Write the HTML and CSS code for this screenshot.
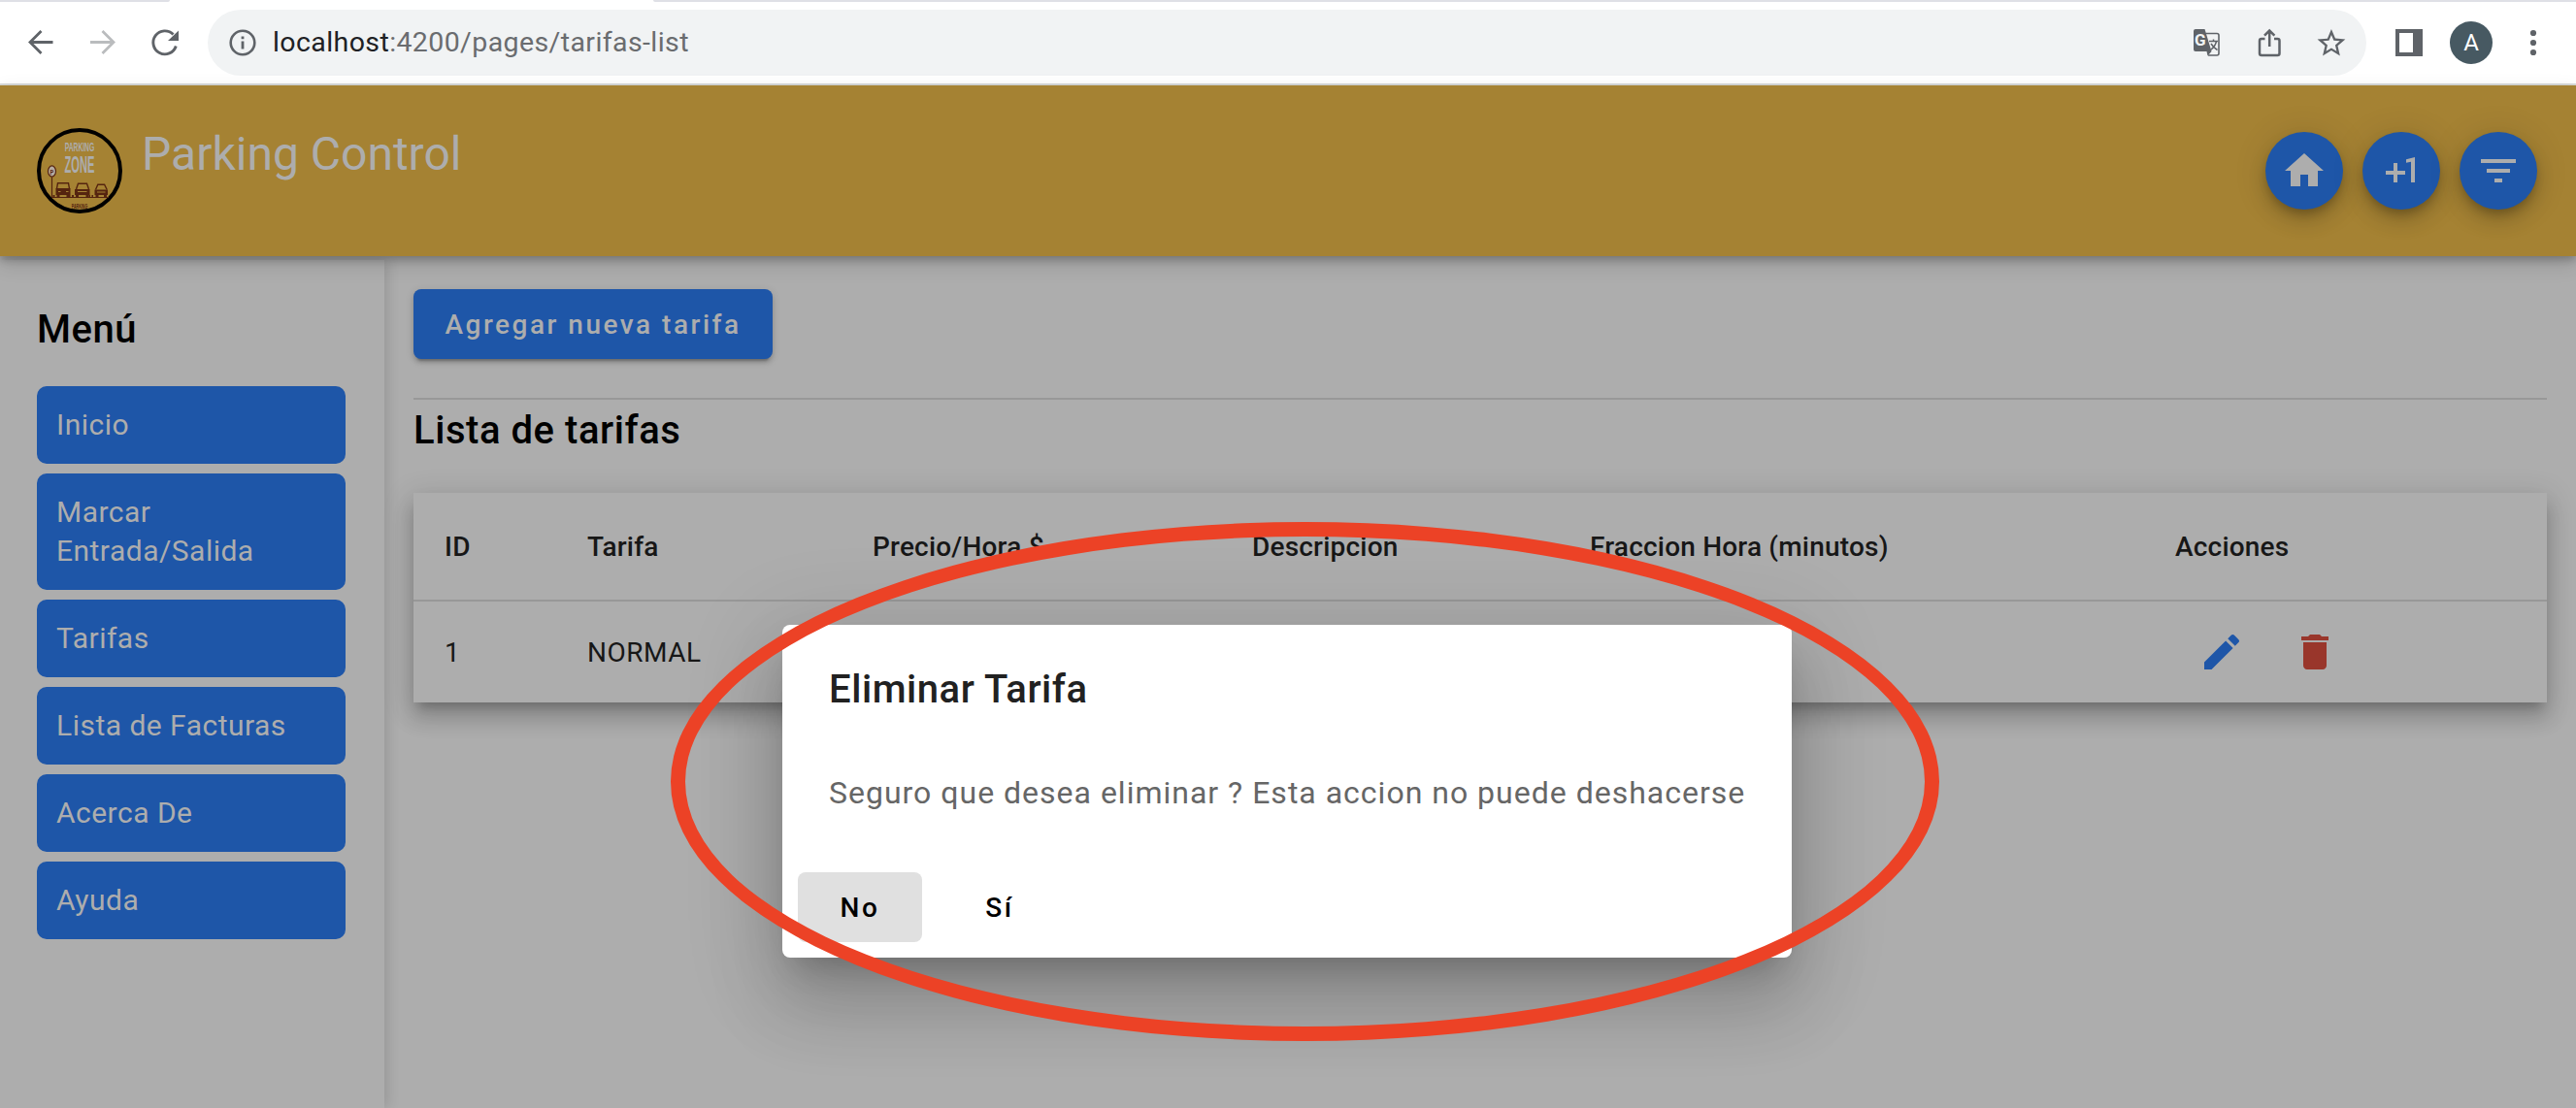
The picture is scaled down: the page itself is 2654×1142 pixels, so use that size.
FILE: index.html
```html
<!DOCTYPE html>
<html lang="es">
<head>
<meta charset="utf-8">
<title>Parking Control</title>
<link rel="stylesheet" href="styles.css">
</head>
<body>
<div class="browser">
  <div class="tab-strip"><span class="tab-edge tab-edge-left"></span><span class="tab-edge tab-edge-right"></span></div>
  <div class="toolbar">
    <svg class="nav-icon" viewBox="0 0 32 32"><path d="M28.500 15.500H5M16.500 4 5 15.500 16.500 27" fill="none" stroke="#5f6368" stroke-width="2.800"/></svg>
    <svg class="nav-icon" viewBox="0 0 32 32"><path d="M3 15.500h24M15.500 4 27 15.500 15.500 27" fill="none" stroke="#babcbe" stroke-width="2.800"/></svg>
    <svg class="nav-icon" viewBox="0 0 32 32"><path d="M27.300 19.500A12 12 0 1 1 24.500 7.500" fill="none" stroke="#5f6368" stroke-width="2.900"/><path d="M30 3.500v10.500H19z" fill="#5f6368"/></svg>
    <div class="omnibox">
      <svg class="info-icon" viewBox="0 0 28 28"><circle cx="14" cy="14" r="12.300" fill="none" stroke="#5f6368" stroke-width="2.600"/><path d="M12.600 12.500h2.800v8h-2.800zM12.600 7.500h2.800v2.800h-2.800z" fill="#5f6368"/></svg>
      <span class="url"><span class="url-host">localhost</span>:4200/pages/tarifas-list</span>
      <div class="omnibox-actions">
        <svg class="action-icon" viewBox="0 0 32 32"><path d="M12 6.500h14a2 2 0 0 1 2 2V27a2 2 0 0 1-2 2h-9" fill="none" stroke="#5f6368" stroke-width="1.600"/><path d="M4 2h9.500l7 23h-16.500a2 2 0 0 1-2-2V4a2 2 0 0 1 2-2z" fill="#5f6368"/><path d="m15.500 25h5l-4 4.500z" fill="#5f6368"/><text x="3" y="19" class="translate-g">G</text><path d="M18 14.500h9M22.500 12.500v2M25.500 14.500c-.8 4-3.500 7-6 9M20 17c1.500 2.500 4 5 6.500 6.500" fill="none" stroke="#5f6368" stroke-width="1.500"/></svg>
        <svg class="action-icon" viewBox="0 0 32 32"><path d="M11.500 12H8a2 2 0 0 0-2 2v13a2 2 0 0 0 2 2h16.500a2 2 0 0 0 2-2V14a2 2 0 0 0-2-2H21M16.200 20V4M11 8.700l5.200-5.200 5.200 5.200" fill="none" stroke="#5f6368" stroke-width="2.500"/></svg>
        <svg class="action-icon" viewBox="0 0 24 24"><path d="M22 9.240l-7.190-.62L12 2 9.190 8.630 2 9.240l5.460 4.730L5.820 21 12 17.270 18.180 21l-1.630-7.030L22 9.240zM12 15.400l-3.760 2.270 1-4.280-3.320-2.880 4.380-.38L12 6.100l1.710 4.040 4.380.38-3.320 2.880 1 4.280L12 15.400z" transform="translate(-1 -.6) scale(1.080)" fill="#5f6368"/></svg>
      </div>
    </div>
    <svg class="panel-icon" viewBox="0 0 28 28"><path fill-rule="evenodd" d="M0 0h28v28H0zM4 4v20h14V4z" fill="#5f6368"/></svg>
    <span class="avatar">A</span>
    <svg class="menu-icon" viewBox="0 0 8 28"><circle cx="4" cy="4" r="3.100"/><circle cx="4" cy="14" r="3.100"/><circle cx="4" cy="24" r="3.100"/></svg>
  </div>
</div>

<header class="app-header">
  <svg class="logo" viewBox="0 0 88 88">
    <circle cx="44" cy="44" r="42" fill="none" stroke="#000" stroke-width="4"/>
    <text transform="translate(28.700 24) scale(.56 1)" class="logo-small">PARKING</text>
    <text transform="translate(28.500 46) scale(.455 1)" class="logo-big">ZONE</text>
    <g fill="none" stroke="#55240f" stroke-width="1.200">
      <ellipse cx="15.500" cy="44.500" rx="4" ry="5.600" fill="#b5aaa0"/>
      <path d="M15.500 50.500V71M15 71.500H74"/>
    </g>
    <text transform="translate(13.500 47.500) scale(.7 1)" class="logo-p">P</text>
    <path d="M16.500 71v-2h2v2zM33 71v-2h1.500v2zM36 71v-2h2v2zM53.500 71v-2H55v2zM56.500 71v-2h1.500v2z" fill="#55240f"/>
    <g fill="none" stroke="#55240f" stroke-width="1.400"><path d="M20.500 62.500l1-5.700h11l1 5.700"/><path d="M40.500 63l2-5.700h9l2 5.700"/><path d="M60.500 63.500l2.300-5.200h6.800l2.600 5.200"/></g>
    <g fill="#55240f"><path d="M19.500 62h15v7h-1v2h-3v-2h-7v2h-3v-2h-1zM39 63h15.500v6h-1v2h-3v-2h-7.500v2h-3v-2h-1zM59.500 63.500h13.500v5.500h-1v2h-3v-2h-5.500v2h-3v-2h-1z"/></g>
    <path d="M22 65.500h2.500M30 65.500h2.500M42 65.500h9.500M62 66h8.500" stroke="#a58233" stroke-width="1"/>
    <text transform="translate(35.800 83) scale(.453 1)" class="logo-foot">PARKING</text>
  </svg>
  <h1 class="app-title">Parking Control</h1>
  <div class="fabs">
    <span class="fab"><svg viewBox="0 0 24 24"><path d="M10 20v-6h4v6h5v-8h3L12 3 2 12h3v8z"/></svg></span>
    <span class="fab"><svg viewBox="0 0 24 24"><path d="M10 8H8v4H4v2h4v4h2v-4h4v-2h-4zm4.500-1.920V7.900l2.500-.5V18h2V5z"/></svg></span>
    <span class="fab"><svg viewBox="0 0 24 24"><path d="M10 18h4v-2h-4v2zM3 6v2h18V6H3zm3 7h12v-2H6v2z"/></svg></span>
  </div>
</header>

<div class="app-body">
  <nav class="sidebar">
    <h2 class="section-title menu-title">Menú</h2>
    <ul class="menu">
      <li class="menu-item">Inicio</li>
      <li class="menu-item">Marcar Entrada/Salida</li>
      <li class="menu-item">Tarifas</li>
      <li class="menu-item">Lista de Facturas</li>
      <li class="menu-item">Acerca De</li>
      <li class="menu-item">Ayuda</li>
    </ul>
  </nav>
  <main class="content">
    <button class="button-add">Agregar nueva tarifa</button>
    <h2 class="section-title list-title">Lista de tarifas</h2>
    <div class="table">
      <div class="row row-head"><span>ID</span><span>Tarifa</span><span>Precio/Hora $</span><span>Descripcion</span><span>Fraccion Hora (minutos)</span><span>Acciones</span></div>
      <div class="row"><span>1</span><span>NORMAL</span><span></span><span></span><span></span>
        <span class="row-actions">
          <svg class="icon-edit" viewBox="0 0 24 24"><path d="M3 17.250V21h3.750L17.810 9.940l-3.750-3.750L3 17.250zM20.710 7.040c.39-.39.39-1.020 0-1.410l-2.340-2.340c-.39-.39-1.020-.39-1.410 0l-1.830 1.830 3.750 3.750 1.830-1.830z"/></svg>
          <svg class="icon-delete" viewBox="0 0 24 24"><path d="M6 19c0 1.100.9 2 2 2h8c1.100 0 2-.9 2-2V7H6v12zM19 4h-3.500l-1-1h-5l-1 1H5v2h14V4z"/></svg>
        </span>
      </div>
    </div>
  </main>
</div>

<div class="dialog">
  <h2 class="dialog-title">Eliminar Tarifa</h2>
  <p class="dialog-text">Seguro que desea eliminar ? Esta accion no puede deshacerse</p>
  <div class="dialog-actions"><button class="dialog-button is-focused">No</button><button class="dialog-button">Sí</button></div>
</div>
<div class="highlight"></div>
</body>
</html>
```
FILE: styles.css
```css
* { box-sizing: border-box; }

body {
  margin: 0;
  width: 2654px;
  height: 1142px;
  overflow: hidden;
  position: relative;
  display: flex;
  flex-direction: column;
  background: #adadad;
  color: #000;
  font-family: Roboto, "Liberation Sans", sans-serif;
}

h1, h2, p, ul { margin: 0; padding: 0; }
svg { display: block; flex: none; }
button { border: 0; font-family: inherit; }

/* Browser chrome */
.browser { height: 88px; flex: none; background: #fff; border-bottom: 2px solid #dadcdb; }
.tab-strip { height: 2px; display: flex; justify-content: space-between; }
.tab-edge { background: #dfe0e6; height: 2px; }
.tab-edge-left { width: 175px; border-bottom-right-radius: 2px; }
.tab-edge-right { width: 1981px; border-bottom-left-radius: 2px; }
.toolbar { height: 84px; display: flex; align-items: center; padding-left: 26px; }
.nav-icon { width: 32px; height: 32px; margin-right: 32px; }
.omnibox {
  width: 2224px; height: 68px; border-radius: 34px; background: #f1f3f4;
  display: flex; align-items: center; padding-left: 22px; margin-left: -4px;
}
.info-icon { width: 28px; height: 28px; }
.url { margin-left: 17px; font-size: 28.500px; line-height: 40px; letter-spacing: .4px; color: #6a6c6f; }
.url-host { color: #202124; }
.omnibox-actions { margin-left: auto; margin-right: 20px; display: flex; gap: 32px; }
.action-icon { width: 32px; height: 32px; }
.translate-g { font-size: 17px; font-weight: 700; fill: #f1f3f4; }
.panel-icon { width: 28px; height: 28px; margin-left: 30px; }
.avatar {
  width: 44px; height: 44px; border-radius: 50%; margin-left: 28px; background: #475962; color: #fff;
  font-size: 24px; line-height: 45px; text-align: center;
}
.menu-icon { width: 8px; height: 28px; margin-left: 38px; fill: #5f6368; }

/* Application header */
.app-header {
  position: relative; z-index: 1; height: 176px; flex: none; display: flex; align-items: center;
  padding: 0 40px 0 38px; background: #a58233;
  box-shadow: 0 4px 8px rgba(0, 0, 0, .22), 0 8px 20px rgba(0, 0, 0, .14);
}
.logo { width: 88px; height: 88px; overflow: visible; }
.logo text { font-family: "Liberation Sans", sans-serif; font-weight: 700; }
.logo-small { font-size: 12px; fill: #adadad; }
.logo-big { font-size: 24.500px; fill: #adadad; }
.logo-p { font-size: 8px; fill: #55240f; }
.logo-foot { font-size: 8px; fill: #55240f; }
.app-title { margin: 0 0 34px 20px; font-size: 48px; line-height: 56px; font-weight: 400; color: #adadad; }
.fabs { margin-left: auto; display: flex; gap: 20px; }
.fab {
  width: 80px; height: 80px; border-radius: 50%; display: grid; place-items: center; background: #1e56a8;
  box-shadow: 0 6px 10px -2px rgba(0, 0, 0, .2), 0 12px 20px rgba(0, 0, 0, .14), 0 2px 36px rgba(0, 0, 0, .12);
}
.fab svg { width: 48px; height: 48px; fill: #adadad; }

/* Body */
.app-body { flex: 1; display: flex; }
.sidebar {
  width: 396px; margin-top: 4px; padding: 52px 40px 0 38px; background: #adadad;
  box-shadow: 4px 0 12px rgba(0, 0, 0, .12);
}
.section-title { font-size: 40px; line-height: 40px; font-weight: 500; letter-spacing: .55px; }
.menu { list-style: none; margin-top: 38px; display: flex; flex-direction: column; gap: 10px; }
.menu-item {
  padding: 20px; border-radius: 10px; background: #1e56a8; color: #adadad;
  font-size: 30px; line-height: 40px; letter-spacing: .48px;
}
.content { flex: 1; padding: 34px 30px 0; }
.button-add {
  display: block; width: 370px; height: 72px; padding: 0; border-radius: 8px; background: #1e56a8; color: #adadad;
  font-size: 28px; font-weight: 500; letter-spacing: 2.500px;
  box-shadow: 0 6px 2px -4px rgba(0, 0, 0, .2), 0 4px 4px rgba(0, 0, 0, .14), 0 2px 10px rgba(0, 0, 0, .12);
}
.list-title { margin-top: 40px; padding-top: 12px; border-top: 2px solid #989898; }
.table {
  margin-top: 44px; background: #adadad; font-size: 28px; color: #171717;
  box-shadow: 0 10px 10px -6px rgba(0, 0, 0, .2), 0 16px 20px 2px rgba(0, 0, 0, .14), 0 6px 28px 4px rgba(0, 0, 0, .12);
}
.row {
  height: 104px; padding-left: 32px; display: grid; align-items: center;
  grid-template-columns: 147px 294px 391px 348px 603px 1fr; letter-spacing: .5px;
}
.row-head { height: 112px; border-bottom: 2px solid #989898; font-weight: 500; letter-spacing: .2px; }
.row-actions { display: flex; gap: 48px; padding-left: 24px; }
.row-actions svg { width: 48px; height: 48px; }
.icon-edit { fill: #1e56a8; }
.icon-delete { fill: #99362b; }

/* Confirmation dialog */
.dialog {
  position: absolute; z-index: 2; left: 806px; top: 644px; width: 1040px; height: 343px; border-radius: 8px;
  background: #fff;
  box-shadow: 0 22px 30px -14px rgba(0, 0, 0, .2), 0 48px 76px 6px rgba(0, 0, 0, .14), 0 18px 92px 16px rgba(0, 0, 0, .12);
}
.dialog-title { padding: 47px 48px 0; font-size: 40px; line-height: 40px; font-weight: 500; letter-spacing: .55px; color: #212121; }
.dialog-text { padding: 66px 48px 0; font-size: 32px; line-height: 40px; letter-spacing: 1px; color: #666; white-space: nowrap; }
.dialog-actions { display: flex; gap: 16px; padding: 62px 16px 0; }
.dialog-button {
  width: 128px; height: 72px; padding: 0; border-radius: 8px; background: none; color: #000;
  font-size: 28px; font-weight: 500; letter-spacing: 2.500px;
}
.is-focused { background: #e0e0e0; }

/* Hand-drawn emphasis ring */
.highlight {
  position: absolute; z-index: 3; left: 691px; top: 538px; width: 1307px; height: 535px;
  border: 15px solid #ec4226; border-radius: 50%;
}
```
